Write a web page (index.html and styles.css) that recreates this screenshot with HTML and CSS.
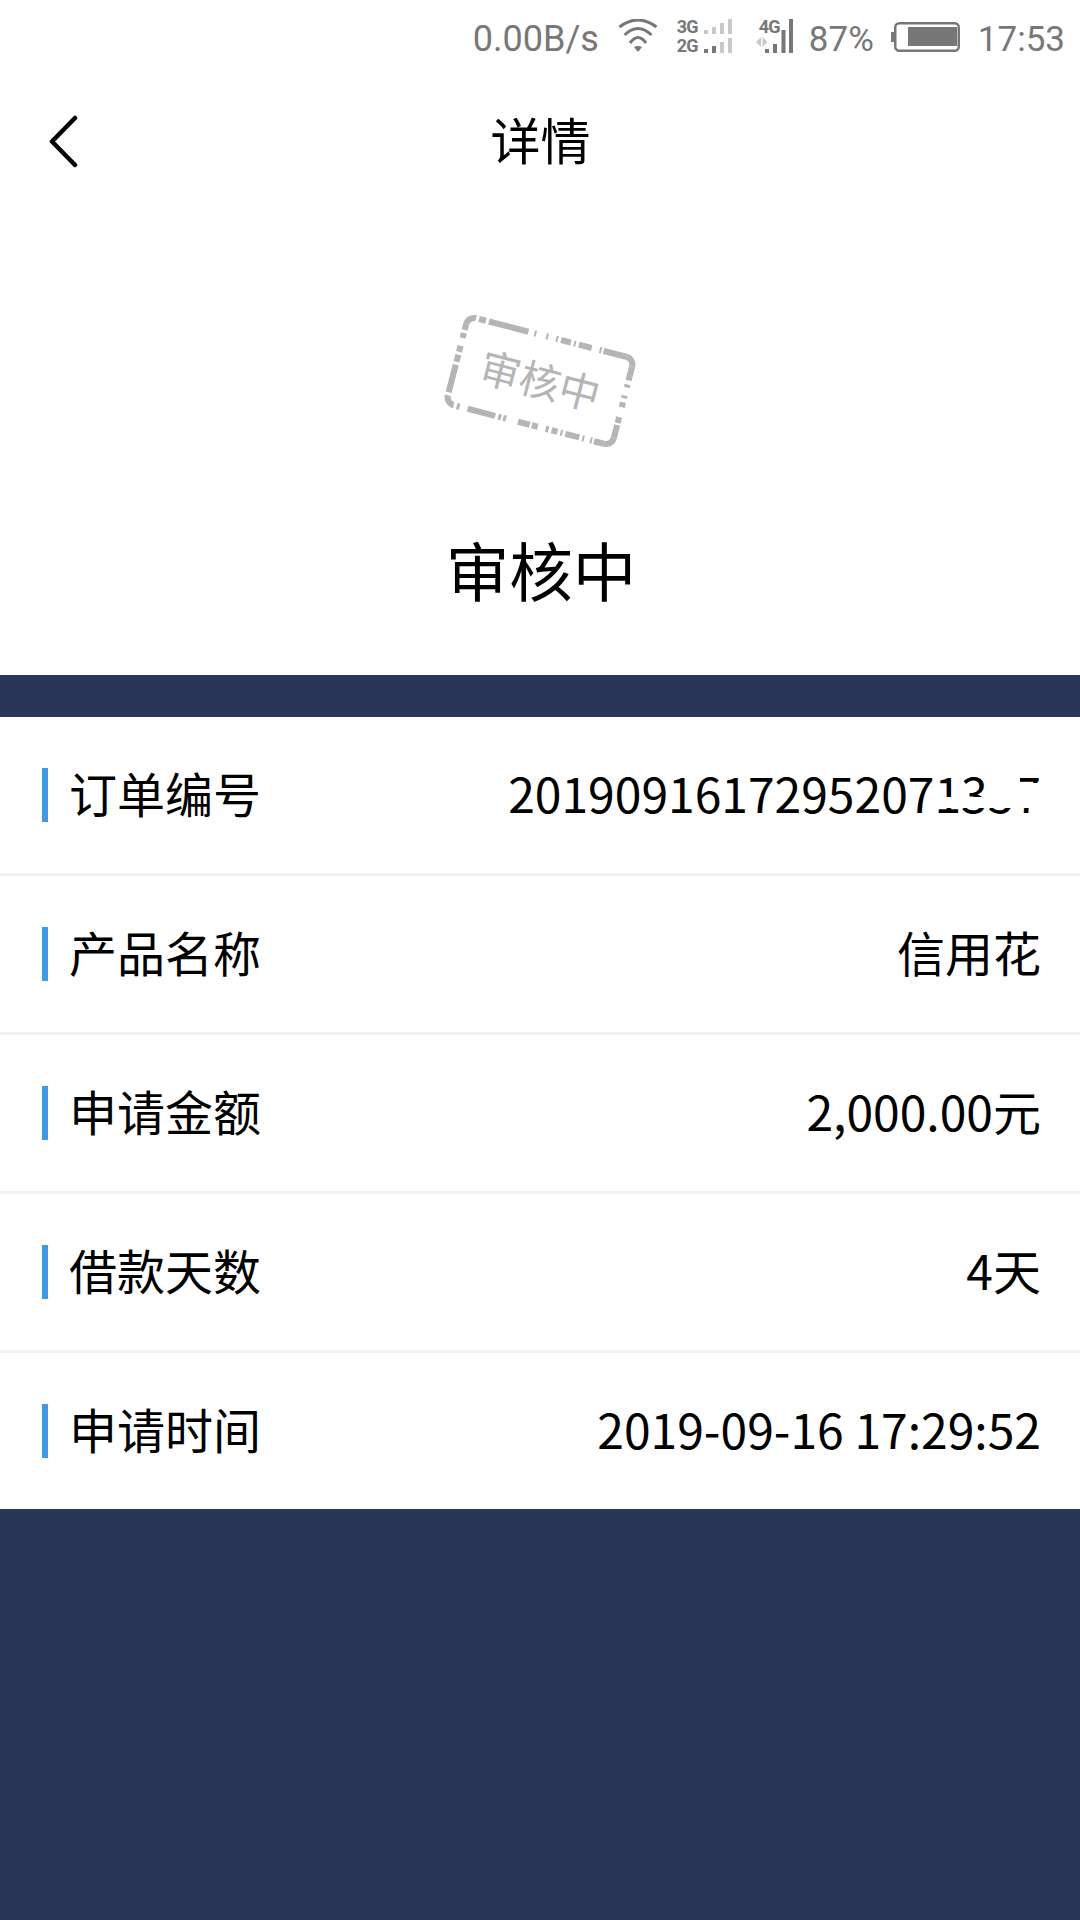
FILE: index.html
```html
<!DOCTYPE html>
<html lang="zh">
<head>
<meta charset="utf-8">
<title>详情</title>
<link rel="stylesheet" href="styles.css">
</head>
<body>
<div class="page">
  <div class="top">
    <div class="status">
      <span class="net">0.00B/s</span>
      <svg class="ic-wifi" width="40" height="34" viewBox="0 0 40 34" fill="none" stroke="#777" stroke-width="3">
        <path d="M1.500 8Q20 -6 38.500 8"/>
        <path d="M6.500 16Q20 3 33.500 16"/>
        <path d="M12 24Q20 13 28 24"/>
        <path d="M16 28Q20 26 24 28L20 33Z" fill="#777" stroke="none"/>
      </svg>
      <div class="sim">
        <div class="sim-row">
          <span class="gen">3G</span>
          <svg width="28" height="15" viewBox="0 0 28 15"><path fill="#c8c8c8" d="M0 11h4v4H0zM8 8h4v7H8zM16 4h4v11h-4zM24 0h4v15h-4z"/></svg>
        </div>
        <div class="sim-row">
          <span class="gen">2G</span>
          <svg width="28" height="15" viewBox="0 0 28 15"><path fill="#c8c8c8" d="M16 4h4v11h-4zM24 0h4v15h-4z"/><path fill="#777" d="M0 11h4v4H0zM8 8h4v7H8z"/></svg>
        </div>
      </div>
      <div class="sim2">
        <span class="gen gen4">4G</span>
        <svg width="37" height="34" viewBox="0 0 37 34">
          <path fill="#c8c8c8" d="M0 23l5-5v10zM6.500 18l5 5-5 5z"/>
          <path fill="#777" d="M9 30h4v4H9zM17 25h4v9h-4zM25.500 11h4v23h-4zM33 0h4v34h-4z"/>
        </svg>
      </div>
      <span class="pct">87%</span>
      <svg class="ic-bat" width="69" height="30" viewBox="0 0 69 30">
        <path fill="#777" d="M0 10h3v10H0z"/>
        <rect x="4.250" y="1.250" width="63.500" height="27.500" rx="4" fill="none" stroke="#777" stroke-width="2.500"/>
        <path fill="#777" d="M17 5h49v19H17z"/>
      </svg>
      <span class="time">17:53</span>
    </div>
    <div class="nav">
      <svg class="back" width="32" height="56" viewBox="0 0 32 56" fill="none" stroke="#000" stroke-width="4.500" stroke-linecap="round" stroke-linejoin="round">
        <path d="M26 5L3 28.500L26 52"/>
      </svg>
      <span class="title">详情</span>
    </div>
    <div class="hero">
      <div class="stamp">
        <svg width="176" height="96" viewBox="0 0 176 96" fill="none" stroke="#b5b5b5" stroke-width="6" stroke-linecap="butt">
          <path d="M4 12A8 8 0 0 1 12 4"/>
          <path d="M164 4A8 8 0 0 1 172 12"/>
          <path d="M172 84A8 8 0 0 1 164 92"/>
          <path d="M12 92A8 8 0 0 1 4 84"/>
          <path d="M12 4H164" stroke-dasharray="0 3 7 3 40 6 2 10 2 8 2 3 10 3 2 3 13 8 2 2 23 4"/>
          <path d="M172 12V84" stroke-dasharray="14 4 3 8 3 4 5 10 6 2 25"/>
          <path d="M12 92H164" stroke-dasharray="0 3 3 8 28 3 3 2 3 12 12 2 6 8 3 3 6 3 2 3 14 3 2 6 2 2 20"/>
          <path d="M4 84V12" stroke-dasharray="0 3 28 3 7 3 6 8 5 3 6"/>
        </svg>
        <span class="stamp-text">审核中</span>
      </div>
      <div class="state">审核中</div>
    </div>
  </div>
  <div class="list">
    <div class="row">
      <span class="label">订单编号</span>
      <span class="value order">20190916172952071357<i class="mask mask-a"></i><i class="mask mask-b"></i><i class="mask mask-c"></i></span>
    </div>
    <div class="row"><span class="label">产品名称</span><span class="value">信用花</span></div>
    <div class="row"><span class="label">申请金额</span><span class="value">2,000.00元</span></div>
    <div class="row"><span class="label">借款天数</span><span class="value">4天</span></div>
    <div class="row"><span class="label">申请时间</span><span class="value">2019-09-16 17:29:52</span></div>
  </div>
  <div class="foot"></div>
</div>
</body>
</html>
```
FILE: styles.css
```css
* { box-sizing: border-box; }
html, body { margin: 0; padding: 0; }
body { width: 1080px; height: 1920px; overflow: hidden; background: #2a3658; font-family: "Noto Sans CJK SC", "Noto Sans", sans-serif; color: #000; }
.page { display: flex; flex-direction: column; height: 1920px; }
.top { height: 675px; background: #fff; display: flex; flex-direction: column; }
.status { height: 76px; display: flex; align-items: center; justify-content: flex-end; padding: 2px 15px 0 0; font-family: Roboto, sans-serif; font-size: 35px; color: #777; }
.net { font-size: 36px; margin-right: 19px; }
.ic-wifi { margin-right: 19px; margin-top: -6px; }
.sim { display: flex; flex-direction: column; gap: 4px; width: 55px; margin-right: 24px; margin-top: -6px; }
.sim-row { display: flex; justify-content: space-between; height: 15px; }
.sim-row + .sim-row { align-items: flex-end; }
.gen { font-size: 18px; font-weight: 700; line-height: 15px; letter-spacing: -1px; color: #777; }
.sim2 { position: relative; width: 37px; height: 34px; margin-right: 16px; margin-top: -6px; }
.gen4 { position: absolute; left: 3px; top: 0; }
.pct { margin-right: 17px; }
.ic-bat { margin-right: 18px; margin-top: -4px; }
.nav { height: 130px; display: flex; align-items: center; justify-content: center; position: relative; padding-bottom: 7px; }
.back { position: absolute; left: 49px; top: 37px; }
.title { font-size: 50px; line-height: 1; margin-left: 1px; }
.hero { flex: 1; display: flex; flex-direction: column; align-items: center; }
.stamp { position: relative; width: 176px; height: 96px; margin-top: 127px; padding-bottom: 5px; transform: rotate(14.400deg) scale(1.02); display: flex; align-items: center; justify-content: center; }
.stamp svg { position: absolute; left: 0; top: 0; }
.stamp-text { font-size: 40px; line-height: 1; color: #b5b5b5; font-weight: 400; }
.state { margin-top: 108px; margin-left: 2px; font-size: 63.500px; line-height: 1; }
.list { background: #fff; margin-top: 42px; display: flex; flex-direction: column; }
.row { height: 159px; display: flex; align-items: center; justify-content: space-between; padding: 0 39px 0 42px; border-bottom: 3px solid #f2f2f2; }
.row:last-child { height: 156px; border-bottom: 0; }
.label { display: flex; align-items: flex-start; font-size: 48px; line-height: 48px; }
.label::before { content: ""; width: 6px; height: 54px; background: #4299e1; margin-right: 21px; }
.value { font-size: 48px; line-height: 48px; height: 54px; }
.order { position: relative; }
.mask { position: absolute; background: #fff; }
.mask-a { left: 427px; top: 29px; width: 105px; height: 11px; }
.mask-b { left: 480px; top: 7px; width: 32px; height: 33px; }
.mask-c { left: 512px; top: 15px; width: 20px; height: 25px; }
.foot { flex: 1; background: #2a3658; }
```
